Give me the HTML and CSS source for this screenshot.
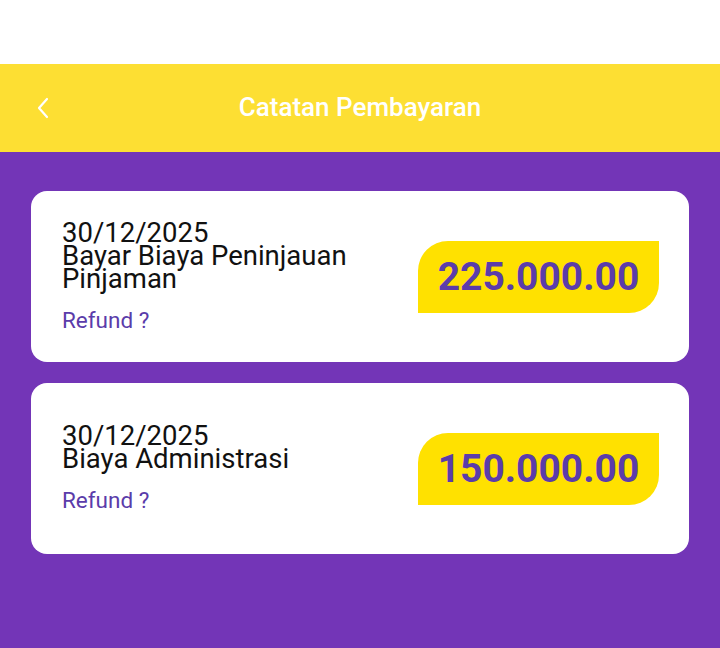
FILE: index.html
```html
<!DOCTYPE html>
<html lang="en">
<head>
    <meta charset="UTF-8">
    <meta name="viewport" content="width=device-width, initial-scale=1.0">
    <title>Catatan Pembayaran</title>
    <link rel="stylesheet" href="styles.css">
</head>
<body>
    <div class="statusbar"></div>

    <div class="appbar">
        <a href="#" class="back" role="button">
            <svg width="14" height="22" viewBox="0 0 14 22">
                <polyline points="11,2 3,11 11,20" fill="none" stroke="#ffffff" stroke-width="2.2" stroke-linecap="round" stroke-linejoin="round"/>
            </svg>
        </a>
        <h1>Catatan Pembayaran</h1>
    </div>

    <div class="content">
        <div class="card">
            <div class="info">
                <div class="date">30/12/2025</div>
                <div class="title">Bayar Biaya Peninjauan Pinjaman</div>
                <a href="#" class="refund">Refund ?</a>
            </div>
            <div class="amount">225.000.00</div>
        </div>

        <div class="card">
            <div class="info">
                <div class="date">30/12/2025</div>
                <div class="title">Biaya Administrasi</div>
                <a href="#" class="refund">Refund ?</a>
            </div>
            <div class="amount">150.000.00</div>
        </div>
    </div>
</body>
</html>
```

FILE: styles.css
```css
html, body {
    height: 100%;
}
body {
    margin: 0;
    font-family: Roboto, "Noto Sans", Arial, sans-serif;
    background-color: #7335b7;
    display: flex;
    flex-direction: column;
}
.statusbar {
    height: 64px;
    background-color: #ffffff;
}
.appbar {
    height: 88px;
    background-color: #fddf33;
    display: flex;
    align-items: center;
    justify-content: center;
    position: relative;
}
.back {
    position: absolute;
    left: 36px;
    top: 33px;
    display: flex;
}
.appbar h1 {
    margin: 0 0 2px;
    color: #ffffff;
    font-size: 26px;
    font-weight: 500;
}
.content {
    flex: 1;
    padding: 39px 31px;
    display: flex;
    flex-direction: column;
    gap: 21px;
}
.card {
    height: 171px;
    background-color: #ffffff;
    border-radius: 16px;
    padding: 0 30px 0 31px;
    display: flex;
    align-items: center;
}
.info {
    flex: 1;
    margin-right: 40px;
}
.date,
.title {
    font-size: 27.5px;
    line-height: 23px;
    color: #111111;
}
.refund {
    display: block;
    margin-top: 17px;
    font-size: 22.5px;
    color: #5b3caa;
    text-decoration: none;
}
.amount {
    width: 241px;
    height: 72px;
    background-color: #ffe100;
    border-radius: 30px 0 30px 0;
    display: flex;
    align-items: center;
    justify-content: center;
    font-size: 39px;
    font-weight: bold;
    color: #5b3caa;
}
```
